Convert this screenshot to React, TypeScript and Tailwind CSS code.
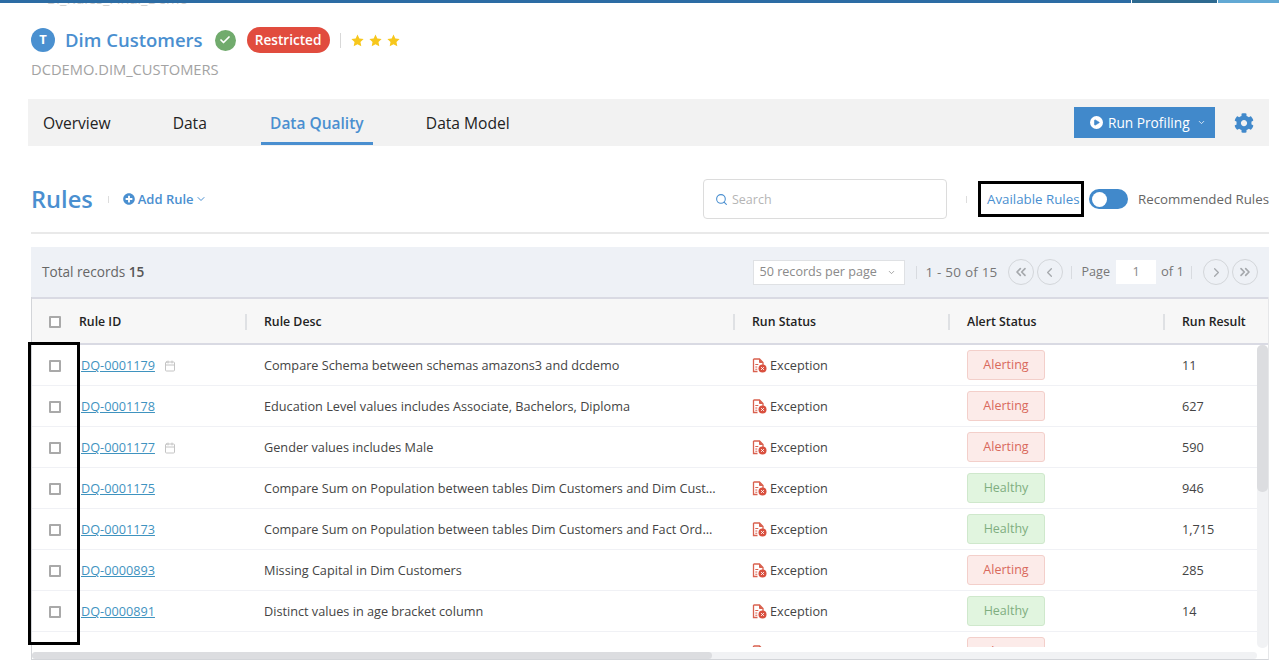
import React from 'react';
import { Search, ChevronDown, ChevronLeft, ChevronRight, ChevronsLeft, ChevronsRight, Calendar, Check, Play } from 'lucide-react';
import { FaCog, FaPlusCircle } from 'react-icons/fa';

const rows = [
  { id: 'DQ-0001179', cal: true, desc: 'Compare Schema between schemas amazons3 and dcdemo', alert: 'Alerting', result: '11' },
  { id: 'DQ-0001178', cal: false, desc: 'Education Level values includes Associate, Bachelors, Diploma', alert: 'Alerting', result: '627' },
  { id: 'DQ-0001177', cal: true, desc: 'Gender values includes Male', alert: 'Alerting', result: '590' },
  { id: 'DQ-0001175', cal: false, desc: 'Compare Sum on Population between tables Dim Customers and Dim Customers', alert: 'Healthy', result: '946' },
  { id: 'DQ-0001173', cal: false, desc: 'Compare Sum on Population between tables Dim Customers and Fact Orders', alert: 'Healthy', result: '1,715' },
  { id: 'DQ-0000893', cal: false, desc: 'Missing Capital in Dim Customers', alert: 'Alerting', result: '285' },
  { id: 'DQ-0000891', cal: false, desc: 'Distinct values in age bracket column', alert: 'Healthy', result: '14' },
  // only the top edge of this row shows above the scrollbar
  { id: '', cal: false, desc: '', alert: 'Alerting', result: '' },
];

function Checkbox() {
  return <span className="block h-[12px] w-[12px] rounded-[1px] border-2 border-[#a9a9a9] bg-white" />;
}

function StarIcon() {
  return (
    <svg width="13" height="13" viewBox="0 0 24 24">
      <path d="M12 1l3.400 7.300 7.900 1-5.800 5.500 1.500 7.900L12 18.800l-7 3.900 1.500-7.900L.7 9.300l7.900-1z" fill="#f7c71c" />
    </svg>
  );
}

function ExceptionIcon() {
  return (
    <svg width="15" height="15" viewBox="0 0 15 15" className="shrink-0">
      <path d="M1.500 1h6l3.500 3.500V7.500M5.500 13.500H1.500V1" fill="none" stroke="#d9614f" strokeWidth="1.300" />
      <path d="M7.500 1v3.500H11" fill="#d9614f" stroke="#d9614f" strokeWidth="1" />
      <path d="M3.300 6.500h3M3.300 9h2M3.300 11.300h2" stroke="#d9614f" strokeWidth="1.100" />
      <circle cx="10.500" cy="10.500" r="4" fill="#d9503f" />
      <path d="M9.200 9.200l2.600 2.600M11.800 9.200l-2.600 2.600" stroke="#fff" strokeWidth="1" />
    </svg>
  );
}

function PageButton({ children }: { children: React.ReactNode }) {
  return (
    <span className="flex h-[26px] w-[26px] items-center justify-center rounded-full border border-[#d3d6da] text-[#a5a8ac]">
      {children}
    </span>
  );
}

function HeaderCell({ label, className }: { label: string; className: string }) {
  return (
    <div className={className}>
      <span className="block border-l-2 border-[#dfe1e4] pl-[17px] text-[12.300px] leading-[16px] font-semibold text-[#222]">{label}</span>
    </div>
  );
}

function AlertBadge({ value }: { value: string }) {
  const healthy = value === 'Healthy';
  return (
    <span
      className={
        healthy
          ? 'flex h-[30px] w-[78px] items-center justify-center rounded-[3px] border border-[#cfe8cc] bg-[#e1f5df] text-[12.500px] text-[#7fae7f]'
          : 'flex h-[30px] w-[78px] items-center justify-center rounded-[3px] border border-[#f3cfca] bg-[#fcebe9] text-[12.500px] text-[#d9695c]'
      }
    >
      {value}
    </span>
  );
}

export default function App() {
  return (
    <div className="relative h-[670px] w-[1279px] overflow-hidden bg-white font-['Open_Sans',sans-serif] text-[#444]">
      <div className="flex h-[3px]">
        <div className="w-[1131px] bg-[#2c6ca4]" />
        <div className="ml-px w-[85px] bg-[#2e6a90]" />
        <div className="ml-px flex-1 bg-[#62a9d4]" />
      </div>

      <div className="h-[3px] overflow-hidden pl-[33px] text-[14.500px] leading-[3px] whitespace-nowrap text-[#cfcfcf]">
        <span className="relative -top-[6px]"><span className="mr-[9px]">-</span>BI_Rules_Final_Demo</span>
      </div>

      <div className="mt-[21px] flex h-[26px] items-center pl-[31px]">
        <span className="flex h-[24px] w-[24px] items-center justify-center rounded-full bg-[#4a90d0] text-[13px] font-bold text-white">T</span>
        <span className="ml-[10px] text-[18.500px] leading-[24px] font-semibold whitespace-nowrap text-[#4a8fd0]">Dim Customers</span>
        <span className="ml-[12px] flex h-[21px] w-[21px] items-center justify-center rounded-full bg-[#71ab6d]">
          <Check size={12} strokeWidth={3.500} className="text-white" />
        </span>
        <span className="ml-[11px] flex h-[26px] w-[83px] items-center justify-center rounded-[13px] bg-[#e14c3e] text-[13.600px] font-semibold text-white">Restricted</span>
        <span className="ml-[10px] h-[15px] w-px bg-[#d8d8d8]" />
        <span className="ml-[10px] flex gap-[5px]">
          <StarIcon />
          <StarIcon />
          <StarIcon />
        </span>
      </div>
      <div className="mt-[7px] pl-[31px] text-[14.700px] leading-[19px] text-[#a3a3a3]">DCDEMO.DIM_CUSTOMERS</div>

      <div className="mt-[20px] ml-[28px] flex h-[47px] w-[1241px] items-center bg-[#f2f2f2] text-[15.600px] text-[#222]">
        <span className="mt-[2px] ml-[15px]">Overview</span>
        <span className="mt-[2px] ml-[62px]">Data</span>
        <span className="ml-[54px] flex h-[47px] flex-col items-center">
          <span className="flex h-[43px] w-[112px] items-center justify-center pt-[6px] text-[15.500px] font-semibold whitespace-nowrap text-[#4a8fd0]">Data Quality</span>
          <span className="h-[3px] w-[112px] bg-[#4a8fd0]" />
        </span>
        <span className="mt-[2px] ml-[53px]">Data Model</span>
        <span className="ml-auto flex h-[31px] w-[141px] items-center gap-[5px] bg-[#4189cb] pl-[16px] text-[13.700px] text-white">
          <span className="flex h-[13px] w-[13px] items-center justify-center rounded-full bg-white">
            <Play size={7} fill="#4189cb" stroke="#4189cb" />
          </span>
          <span className="mt-[2px]">Run Profiling</span>
          <ChevronDown size={9} className="ml-[2px]" />
        </span>
        <FaCog size={20} className="mr-[15px] ml-[19px] text-[#4189cb]" />
      </div>

      <div className="mt-[33px] ml-[31px] flex h-[40px] w-[1238px] items-center whitespace-nowrap">
        <span className="text-[23.600px] leading-[40px] font-semibold text-[#4a8fd0]">Rules</span>
        <span className="ml-[15px] h-[7px] w-px bg-[#ddd]" />
        <span className="ml-[14px] flex items-center text-[13px] font-semibold text-[#4a8fd0]">
          <FaPlusCircle size={12} className="mr-[3px]" />
          <span className="mt-[2px]">Add Rule</span>
          <ChevronDown size={12} className="ml-px" />
        </span>
        <span className="ml-auto flex h-[40px] w-[244px] items-center rounded-[4px] border border-[#dcdcdc] pl-[11px] text-[12.500px] text-[#b5b5b5]">
          <Search size={13} className="mr-[4px] text-[#4a8fd0]" />
          <span className="mt-[2px]">Search</span>
        </span>
        <span className="ml-[19px] h-[7px] w-px bg-[#ddd]" />
        <span className="ml-[11px] flex h-[36px] w-[106px] items-center border-[3px] border-black pt-[2px] pl-[6px] text-[13.300px] text-[#4a8fd0]">
          Available Rules
        </span>
        <span className="ml-[5px] flex h-[20px] w-[39px] items-center rounded-full bg-[#4189cb] pl-[3px]">
          <span className="h-[15px] w-[15px] rounded-full bg-white" />
        </span>
        <span className="mt-[2px] ml-[10px] text-[13.300px] text-[#666]">Recommended Rules</span>
      </div>

      <div className="mt-[13px] ml-[31px] h-[2px] w-[1238px] bg-[#e9e9e9]" />

      <div className="mt-[13px] ml-[31px] flex h-[50px] w-[1238px] items-center bg-[#eef1f6] pr-[11px] text-[12.600px] whitespace-nowrap text-[#777]">
        <span className="mt-[1px] ml-[11px] text-[13.600px] text-[#666]">Total records <span className="font-semibold text-[#555]">15</span></span>
        <span className="ml-auto flex h-[25px] w-[152px] items-center justify-between border border-[#dfe1e4] bg-white px-[5px] text-[12.600px] text-[#8a8a8a]">
          50 records per page
          <ChevronDown size={9} className="mr-[3px]" />
        </span>
        <span className="ml-[11px] h-[13px] w-px bg-[#d8dbe0]" />
        <span className="ml-[8px] text-[13.500px] tracking-[0.200px]">1 - 50 of 15</span>
        <span className="ml-[10px] flex gap-[3px]">
          <PageButton><ChevronsLeft size={16} strokeWidth={2.500} /></PageButton>
          <PageButton><ChevronLeft size={15} /></PageButton>
        </span>
        <span className="ml-[8px] h-[13px] w-px bg-[#d8dbe0]" />
        <span className="ml-[10px]">Page</span>
        <span className="ml-[6px] flex h-[24px] w-[40px] items-center justify-center bg-white text-[#888]">1</span>
        <span className="ml-[5px] text-[13px]">of 1</span>
        <span className="ml-[7px] h-[13px] w-px bg-[#d8dbe0]" />
        <span className="ml-[11px] flex gap-[3px]">
          <PageButton><ChevronRight size={15} /></PageButton>
          <PageButton><ChevronsRight size={16} strokeWidth={2.500} /></PageButton>
        </span>
      </div>

      <div className="relative ml-[31px] h-[363px] w-[1238px] border-r border-b border-l border-[#d3d5d9] border-r-[#e6e7e9]">
        <div className="flex h-[48px] items-center border-t-2 border-b-2 border-[#d9dae3] bg-[#f7f7f7] pt-[1px]">
          <div className="flex w-[47px] justify-center pr-[1px]"><Checkbox /></div>
          <div className="mt-[1px] w-[166px] text-[12.300px] font-semibold text-[#222]">Rule ID</div>
          <HeaderCell label="Rule Desc" className="w-[488px]" />
          <HeaderCell label="Run Status" className="w-[215px]" />
          <HeaderCell label="Alert Status" className="w-[215px]" />
          <HeaderCell label="Run Result" className="flex-1" />
        </div>

        <div className="h-[302px] overflow-hidden">
          {rows.map((r, i) => (
            <div key={i} className="flex h-[41px] items-center border-b border-[#f0f1f5] text-[12.700px] text-[#444]">
              <div className="mt-[2px] flex w-[47px] justify-center pr-[1px]"><Checkbox /></div>
              <div className="mt-[2px] flex w-[166px] items-center pl-[2px]">
                <span className="text-[#3f93bf] underline">{r.id}</span>
                {r.cal && <Calendar size={12} className="ml-[9px] text-[#c4c4c4]" />}
              </div>
              <div className="mt-[2px] w-[488px] pl-[19px]">
                <span className="block w-[455px] truncate">{r.desc}</span>
              </div>
              <div className="mt-[2px] flex w-[215px] items-center gap-[3px] pl-[19px]">
                <ExceptionIcon />
                Exception
              </div>
              <div className="w-[215px] pl-[19px]"><AlertBadge value={r.alert} /></div>
              <div className="mt-[2px] flex-1 pl-[19px]">{r.result}</div>
            </div>
          ))}
        </div>

        <div className="mt-[5px] mr-[11px] h-[7px] rounded-[4px] bg-[#f1f2f4]">
          <div className="h-[7px] w-[680px] rounded-[4px] bg-[#dcdde0]" />
        </div>

        <div className="absolute top-[48px] right-0 h-[303px] w-[11px] rounded-[5px] bg-[#f1f2f4]">
          <div className="h-[147px] w-[11px] rounded-[5px] bg-[#dcdde0]" />
        </div>
      </div>

      <div className="absolute top-[342px] left-[28px] h-[303px] w-[52px] border-[3px] border-black" />
    </div>
  );
}
